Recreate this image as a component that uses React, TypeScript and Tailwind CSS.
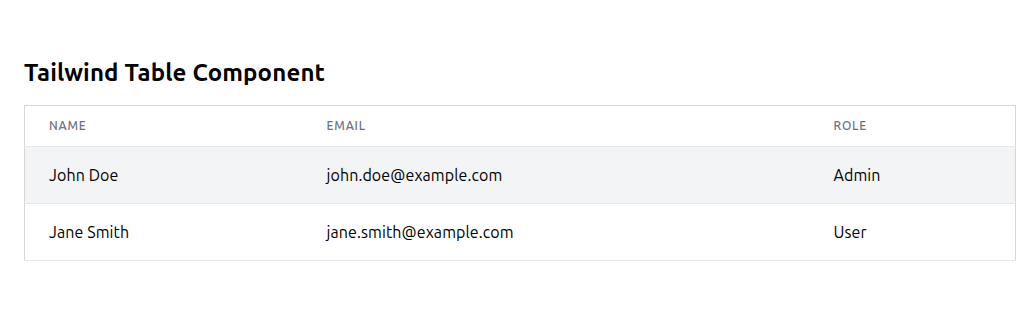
import React from "react";

const rows = [
  { name: "John Doe", email: "john.doe@example.com", role: "Admin" },
  { name: "Jane Smith", email: "jane.smith@example.com", role: "User" },
];

export default function App() {
  return (
    <div
      className="min-h-screen bg-white px-6 pt-[57px] text-gray-900"
      style={{ fontFamily: '"Ubuntu", "Noto Sans", sans-serif' }}
    >
      <h1 className="mb-[16px] text-2xl leading-8 font-bold tracking-[0.15px] text-black">Tailwind Table Component</h1>
      <table className="w-[992px] table-fixed border-collapse border border-[#d5d7dd]">
        <thead>
          <tr className="border-b border-[#e5e7eb]">
            <th className="w-[278px] px-6 py-3 text-left text-xs leading-4 font-medium tracking-[0.07em] text-[#6b7280] uppercase">
              Name
            </th>
            <th className="w-[507px] px-6 py-3 text-left text-xs leading-4 font-medium tracking-[0.07em] text-[#6b7280] uppercase">
              Email
            </th>
            <th className="px-6 py-3 text-left text-xs leading-4 font-medium tracking-[0.07em] text-[#6b7280] uppercase">
              Role
            </th>
          </tr>
        </thead>
        <tbody>
          {rows.map((r, i) => (
            <tr
              key={r.email}
              className={`border-b border-[#e5e7eb] ${i === 0 ? "bg-[#f3f4f6]" : "bg-white"}`}
            >
              <td className="px-6 py-4 text-base leading-6 tracking-[0.1px] text-black">{r.name}</td>
              <td className="px-6 py-4 text-base leading-6 tracking-[0.1px] text-black">{r.email}</td>
              <td className="px-6 py-4 text-base leading-6 tracking-[0.1px] text-black">{r.role}</td>
            </tr>
          ))}
        </tbody>
      </table>
    </div>
  );
}
